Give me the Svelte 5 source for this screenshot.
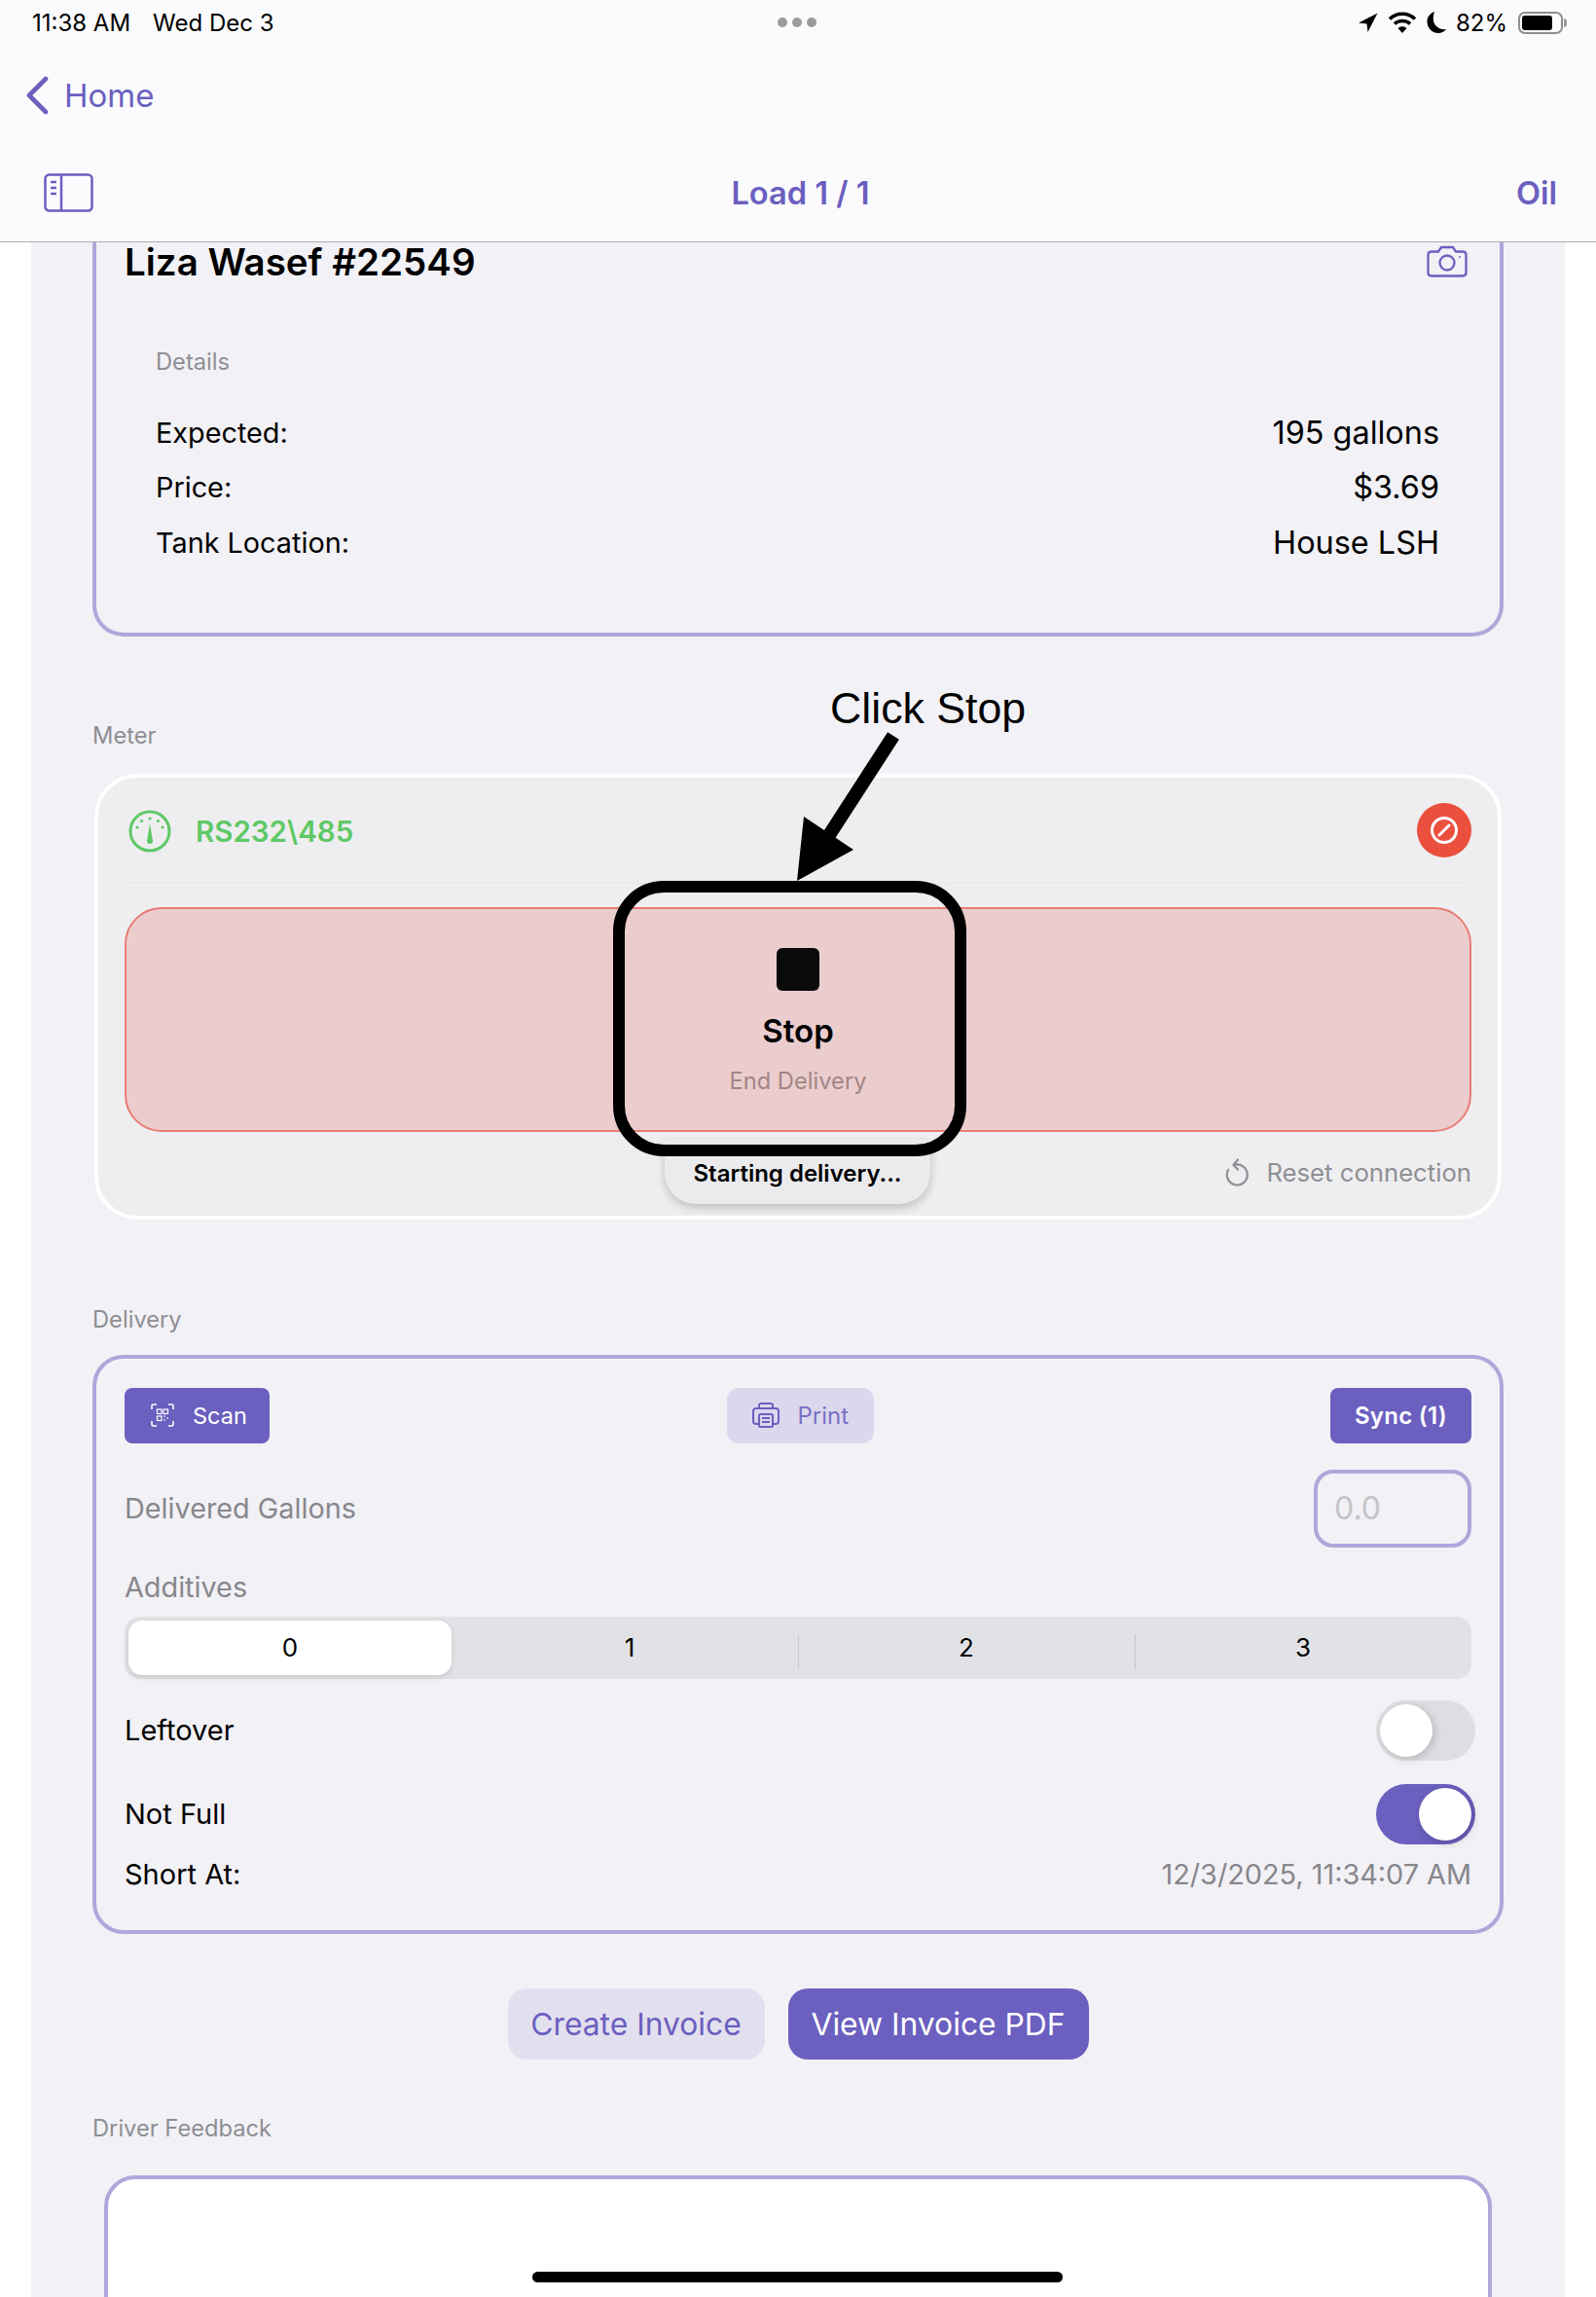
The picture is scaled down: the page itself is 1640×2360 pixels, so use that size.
<script lang="ts">
	const details = [
		{ label: 'Expected:', value: '195 gallons' },
		{ label: 'Price:', value: '$3.69' },
		{ label: 'Tank Location:', value: 'House LSH' }
	];
	const additives = [0, 1, 2, 3];
	let selectedAdditive = $state(0);
	let leftover = $state(false);
	let notFull = $state(true);
</script>

<div class="page">
	<header class="nav">
		<div class="status">
			<span class="clock">11:38 AM</span>
			<span class="date">Wed Dec 3</span>
			<span class="dots"><i></i><i></i><i></i></span>
			<span class="status-right">
				<svg width="20" height="20" viewBox="0 0 20 20"><path d="M19.5 .5 L9.5 20 L8.5 11.5 L0 10.5 Z" fill="#000" /></svg>
				<svg class="wifi" width="30" height="24" viewBox="0 0 30 24" fill="none" stroke="#000" stroke-width="3.6"><path d="M2 8.5 C9 1.5 21 1.5 28 8.5" /><path d="M7 13.5 C11 9.5 19 9.5 23 13.5" /><path d="M15 23 L10.5 18 C13 15.8 17 15.8 19.5 18 Z" fill="#000" stroke="none" /></svg>
				<svg width="20" height="24" viewBox="0 0 20 24"><path d="M8 1 C2.5 3 0 7.5 .5 12 C1 18.500 6 23 12 23 C15 23 18 21.500 20 19 C13 20 8 15.500 7 10.500 C6.500 7 7 4 8 1 Z" fill="#000" /></svg>
				<span class="pct">82%</span>
				<span class="battery"><b></b></span>
			</span>
		</div>
		<a class="back" href="#home">
			<svg width="24" height="40" viewBox="0 0 24 40" fill="none" stroke="currentColor" stroke-width="4.6" stroke-linecap="round" stroke-linejoin="round"><path d="M21 3 L4 20 L21 37" /></svg>
			<span>Home</span>
		</a>
		<div class="titlebar">
			<svg width="51" height="40" viewBox="0 0 51 40" fill="none" stroke="currentColor" stroke-width="2.5"><rect x="1.500" y="1.500" width="48" height="37" rx="4" /><path d="M18 2 V38" /><path d="M7 9 H13 M7 15 H13 M7 21 H13" /></svg>
			<strong>Load 1 / 1</strong>
			<span class="oil">Oil</span>
		</div>
	</header>

	<main class="sheet">
		<section class="card customer">
			<div class="customer-head">
				<h1>Liza Wasef #22549</h1>
				<svg width="42" height="33" viewBox="0 0 42 33" fill="none" stroke="currentColor" stroke-width="2.300"><path d="M5 6.500 H12 L15 2 H27 L30 6.500 H37 Q40.500 6.500 40.500 10 V28 Q40.500 31.500 37 31.500 H5 Q1.500 31.500 1.500 28 V10 Q1.500 6.500 5 6.500 Z" /><circle cx="21" cy="18" r="7.500" /><circle cx="34" cy="12" r="1" fill="currentColor" stroke="none" /></svg>
			</div>
			<div class="details">
				<div class="caption">Details</div>
				{#each details as row}
					<div class="detail-row"><span>{row.label}</span><span>{row.value}</span></div>
				{/each}
			</div>
		</section>

		<div class="caption section-label meter-label">Meter</div>
		<section class="meter">
			<div class="meter-head">
				<svg class="gauge" width="44" height="44" viewBox="0 0 44 44" fill="none" stroke="#5fc866" stroke-width="3"><circle cx="22" cy="22" r="20" /><path d="M22 14 L25 32 A3 3 0 0 1 19 32 Z" fill="#5fc866" stroke="none" /><circle cx="22" cy="9" r="1.600" fill="#5fc866" stroke="none" /><circle cx="13.500" cy="11.500" r="1.600" fill="#5fc866" stroke="none" /><circle cx="30.500" cy="11.500" r="1.600" fill="#5fc866" stroke="none" /><circle cx="9" cy="18" r="1.600" fill="#5fc866" stroke="none" /><circle cx="35" cy="18" r="1.600" fill="#5fc866" stroke="none" /></svg>
				<span class="port">RS232\485</span>
				<span class="disconnect">
					<svg width="30" height="30" viewBox="0 0 30 30" fill="none" stroke="#fff" stroke-width="3"><circle cx="15" cy="15" r="12.500" /><path d="M10 20 L20 10" stroke-linecap="round" /></svg>
				</span>
			</div>
			<button class="stop">
				<span class="stop-icon"></span>
				<span class="stop-title">Stop</span>
				<span class="stop-sub">End Delivery</span>
			</button>
			<div class="meter-foot">
				<svg width="24" height="30" viewBox="0 0 24 30" fill="none" stroke="#8e8e93" stroke-width="2.200" stroke-linecap="round" stroke-linejoin="round"><path d="M9 7 A10.500 10.500 0 1 1 3 12" /><path d="M13 1.500 L8.500 7 L13 11.500" /></svg>
				<span>Reset connection</span>
			</div>
			<div class="toast">Starting delivery...</div>
		</section>

		<div class="caption section-label delivery-label">Delivery</div>
		<section class="card delivery">
			<div class="toolbar">
				<button class="btn scan">
					<svg width="24" height="24" viewBox="0 0 24 24" fill="none" stroke="#fff" stroke-width="1.600"><path d="M1 6 V2.500 Q1 1 2.500 1 H6 M18 1 H21.500 Q23 1 23 2.500 V6 M23 18 V21.500 Q23 23 21.500 23 H18 M6 23 H2.500 Q1 23 1 21.500 V18" /><rect x="6.500" y="6" width="4.500" height="4.500" stroke-width="1.200" /><rect x="13" y="6" width="4.500" height="4.500" stroke-width="1.200" /><rect x="6.500" y="13" width="4.500" height="4.500" stroke-width="1.200" /><path d="M13 13 H15 M16 15 H18 M13 17 H15" stroke-width="1.200" /></svg>
					Scan
				</button>
				<button class="btn print">
					<svg width="28" height="26" viewBox="0 0 28 26" fill="none" stroke="#6b5fbf" stroke-width="2"><path d="M7 6 V3 Q7 1 9 1 H19 Q21 1 21 3 V6" /><path d="M7 22 H4 Q1 22 1 19 V9 Q1 6 4 6 H24 Q27 6 27 9 V19 Q27 22 24 22 H21" /><rect x="7" y="12" width="14" height="13" rx="1.500" /><path d="M10 16 H18 M10 20 H18" /></svg>
					Print
				</button>
				<button class="btn sync">Sync (1)</button>
			</div>

			<div class="gallons">
				<span class="muted">Delivered Gallons</span>
				<input class="gallons-input" placeholder="0.0" />
			</div>

			<div class="muted additives-label">Additives</div>
			<div class="segments">
				{#each additives as n, i}
					<button
						class="segment"
						class:active={selectedAdditive === n}
						class:divided={i > 1}
						onclick={() => { selectedAdditive = n; }}
					>{n}</button>
				{/each}
			</div>

			<div class="toggle-row leftover">
				<span>Leftover</span>
				<button class="toggle" class:on={leftover} aria-label="Leftover" onclick={() => { leftover = !leftover; }}><i></i></button>
			</div>
			<div class="toggle-row notfull">
				<span>Not Full</span>
				<button class="toggle" class:on={notFull} aria-label="Not Full" onclick={() => { notFull = !notFull; }}><i></i></button>
			</div>
			<div class="short-row">
				<span>Short At:</span>
				<span class="muted">12/3/2025, 11:34:07 AM</span>
			</div>
		</section>

		<div class="actions">
			<button class="action light">Create Invoice</button>
			<button class="action solid">View Invoice PDF</button>
		</div>

		<div class="caption section-label feedback-label">Driver Feedback</div>
		<div class="feedback"></div>
	</main>

	<!-- annotation drawn over the screenshot -->
	<div class="note">Click Stop</div>
	<svg class="arrow" width="120" height="160" viewBox="810 750 120 160">
		<path d="M918 756 L852 858" stroke="#000" stroke-width="14" />
		<path d="M819 905 L826 839 L877 873 Z" fill="#000" />
	</svg>
	<div class="highlight"></div>
	<div class="home-bar"></div>
</div>

<style>
	:global(body) {
		margin: 0;
		background: #fff;
	}

	.page {
		position: relative;
		width: 1640px;
		height: 2360px;
		overflow: hidden;
		display: flex;
		flex-direction: column;
		font-family: Inter, 'Liberation Sans', sans-serif;
		color: #000;
	}

	.nav {
		height: 248px;
		flex-shrink: 0;
		box-sizing: content-box;
		background: #fbfbfd;
		border-bottom: 1px solid #adadb0;
		color: #6b5fbf;
		display: flex;
		flex-direction: column;
	}

	.status {
		height: 46px;
		padding: 0 34px 0 33px;
		display: flex;
		align-items: center;
		position: relative;
		font-size: 24px;
		color: #000;
	}

	.date { margin-left: 23px; }

	.dots {
		position: absolute;
		left: 799px;
		top: 18px;
		display: flex;
		gap: 5px;
	}

	.dots i {
		width: 10px;
		height: 10px;
		border-radius: 50%;
		background: #9b9b9d;
	}

	.status-right {
		margin-left: auto;
		display: flex;
		align-items: center;
		gap: 10px;
	}

	.pct { margin-right: 1px; }

	.battery {
		width: 46px;
		height: 23px;
		box-sizing: border-box;
		border: 2px solid #8f8f92;
		border-radius: 7px;
		padding: 2px;
		position: relative;
		display: block;
	}

	.battery b {
		display: block;
		width: 82%;
		height: 100%;
		background: #000;
		border-radius: 3px;
	}

	.battery::after {
		content: '';
		position: absolute;
		right: -6px;
		top: 5px;
		width: 3px;
		height: 9px;
		background: #9b9b9d;
		border-radius: 0 3px 3px 0;
	}

	.back {
		margin-top: 32px;
		padding-left: 26px;
		height: 40px;
		display: flex;
		align-items: center;
		gap: 16px;
		color: inherit;
		text-decoration: none;
		font-size: 33px;
	}

	.titlebar {
		margin-top: 60px;
		padding: 0 40px 0 45px;
		height: 40px;
		display: flex;
		align-items: center;
		justify-content: space-between;
		font-size: 32.600px;
	}

	.titlebar strong {
		font-weight: 600;
		margin-left: -9px;
	}

	.oil { font-weight: 600; }

	.sheet {
		flex: 1;
		margin: 0 32px;
		padding: 0 63px;
		background: #f2f1f6;
		display: flex;
		flex-direction: column;
		min-height: 0;
	}

	.card {
		border: 4px solid #aea7da;
		border-radius: 32px;
	}

	.customer {
		border-top: none;
		border-top-left-radius: 0;
		border-top-right-radius: 0;
		padding: 0 33px 64px 29px;
		flex-shrink: 0;
	}

	.customer-head {
		height: 39px;
		display: flex;
		align-items: center;
		justify-content: space-between;
		color: #6b5fbf;
	}

	h1 {
		margin: 0;
		font-size: 38.500px;
		font-weight: 600;
		color: #000;
	}

	.details {
		margin: 69px 29px 0 32px;
	}

	.caption {
		font-size: 23.700px;
		line-height: 30px;
		color: #8e8e93;
	}

	.detail-row {
		display: flex;
		justify-content: space-between;
		align-items: center;
		height: 56.500px;
		font-size: 32.400px;
	}

	.details .caption { margin-bottom: 29px; }

	.detail-row span:first-child { font-size: 28.800px; }

	.section-label {
		flex-shrink: 0;
	}

	.meter-label { margin-top: 87px; }

	.meter {
		margin: 24px 2px 0 2px;
		height: 458px;
		flex-shrink: 0;
		box-sizing: border-box;
		position: relative;
		border: 4px solid #fff;
		border-radius: 44px;
		background: #eeeef0;
		padding: 0 27px;
	}

	.meter-head {
		height: 108px;
		display: flex;
		align-items: center;
		gap: 25px;
		border-bottom: 1px solid #e6e6e8;
	}

	.gauge { margin: 2px 0 0 4px; }

	.port {
		font-size: 29.500px;
		font-weight: 600;
		color: #5fc866;
		margin-top: 2px;
	}

	.disconnect {
		margin-left: auto;
		width: 56px;
		height: 56px;
		border-radius: 50%;
		background: #eb4f3d;
		display: flex;
		align-items: center;
		justify-content: center;
	}

	.stop {
		margin-top: 24px;
		width: 100%;
		height: 231px;
		padding: 40px 0 0;
		box-sizing: border-box;
		background: #ebcdce;
		border: 2px solid #e97c75;
		border-radius: 38px;
		display: flex;
		flex-direction: column;
		align-items: center;
		font-family: inherit;
	}

	.stop-icon {
		width: 44px;
		height: 44px;
		border-radius: 6px;
		background: #0a0a0a;
	}

	.stop-title {
		margin-top: 21px;
		font-size: 33px;
		line-height: 40px;
		font-weight: 600;
		color: #000;
	}

	.stop-sub {
		margin-top: 17px;
		font-size: 23.700px;
		line-height: 30px;
		color: #a28686;
	}

	.meter-foot {
		margin-top: 24px;
		display: flex;
		justify-content: flex-end;
		align-items: center;
		gap: 18px;
		font-size: 25.700px;
		line-height: 36px;
		color: #8e8e93;
	}

	.toast {
		position: absolute;
		left: 582px;
		top: 372px;
		width: 273px;
		height: 66px;
		box-sizing: border-box;
		padding-top: 19px;
		background: #ebebed;
		border-radius: 0 0 32px 32px;
		box-shadow: 0 4px 10px rgba(0, 0, 0, 0.2);
		text-align: center;
		font-size: 24px;
		line-height: 32px;
		font-weight: 600;
	}

	.delivery-label { margin-top: 88px; }

	.delivery {
		margin-top: 21px;
		height: 595px;
		box-sizing: border-box;
		flex-shrink: 0;
		padding: 30px 29px 0;
	}

	.toolbar {
		display: flex;
		justify-content: space-between;
		align-items: center;
	}

	.btn {
		height: 57px;
		border: none;
		border-radius: 8px;
		display: flex;
		align-items: center;
		font-family: inherit;
		font-size: 23.500px;
		background: #6b5fbf;
		color: #fff;
		padding: 0;
	}

	.scan {
		width: 149px;
		padding-left: 27px;
		gap: 19px;
	}

	.print {
		width: 151px;
		padding-left: 26px;
		gap: 19px;
		background: #dbd8ee;
		color: #7a6fc6;
		border-radius: 12px;
		font-size: 24px;
	}

	.sync {
		width: 145px;
		justify-content: center;
		font-weight: 600;
		font-size: 24px;
		letter-spacing: 0.3px;
	}

	.gallons {
		margin-top: 27px;
		display: flex;
		justify-content: space-between;
		align-items: center;
	}

	.muted {
		color: #87878c;
		font-size: 28.800px;
	}

	.gallons-input {
		width: 162px;
		height: 80px;
		box-sizing: border-box;
		border: 4px solid #aea7da;
		border-radius: 20px;
		background: transparent;
		padding: 0 0 0 17px;
		font-family: inherit;
		font-size: 32px;
		outline: none;
	}

	.gallons-input::placeholder { color: #c4c4c7; }

	.additives-label {
		margin-top: 23px;
		line-height: 36px;
	}

	.segments {
		margin-top: 12px;
		height: 64px;
		background: #e2e2e6;
		border-radius: 16px;
		display: grid;
		grid-template-columns: repeat(4, 1fr);
		align-items: center;
		box-sizing: border-box;
	}

	.segment {
		height: 56px;
		border: none;
		background: none;
		font-family: inherit;
		font-size: 26px;
		color: #000;
		padding: 0;
		position: relative;
	}

	.segment.active {
		margin: 0 10px 0 4px;
		background: #fff;
		border-radius: 14px;
		box-shadow: 0 2px 6px rgba(0, 0, 0, 0.12);
	}

	.segment.divided::before {
		content: '';
		position: absolute;
		left: 0;
		top: 14px;
		height: 36px;
		width: 1px;
		background: #c9c9cc;
	}

	.toggle-row {
		display: flex;
		justify-content: space-between;
		align-items: center;
		height: 62px;
		font-size: 29px;
	}

	.leftover { margin-top: 22px; }
	.notfull { margin-top: 24px; }

	.toggle {
		width: 102px;
		height: 62px;
		margin-right: -4px;
		padding: 4px;
		border: none;
		border-radius: 31px;
		background: #dedee2;
		display: flex;
	}

	.toggle i {
		width: 54px;
		height: 54px;
		border-radius: 50%;
		background: #fff;
		box-shadow: 2px 2px 8px rgba(0, 0, 0, 0.18);
	}

	.toggle.on {
		background: #6b5fbf;
		justify-content: flex-end;
	}

	.short-row {
		margin-top: 12px;
		display: flex;
		justify-content: space-between;
		align-items: center;
		font-size: 29px;
		line-height: 38px;
	}

	.actions {
		margin-top: 56px;
		display: flex;
		justify-content: center;
		gap: 24px;
		flex-shrink: 0;
	}

	.action {
		height: 73px;
		border: none;
		border-radius: 20px;
		font-family: inherit;
		font-size: 31.800px;
		padding: 0;
	}

	.light {
		width: 264px;
		background: #e2dfef;
		color: #6b5fbf;
	}

	.solid {
		width: 309px;
		background: #6b5fbf;
		color: #fff;
	}

	.feedback-label { margin-top: 56px; }

	.feedback {
		margin: 33px 12px 0 12px;
		height: 200px;
		flex-shrink: 0;
		background: #fff;
		border: 4px solid #aea7da;
		border-radius: 32px;
	}

	.note {
		position: absolute;
		left: 853px;
		top: 700px;
		font-family: 'Liberation Sans', Arial, sans-serif;
		font-size: 44.700px;
		line-height: 56px;
	}

	.arrow {
		position: absolute;
		left: 810px;
		top: 750px;
	}

	.highlight {
		position: absolute;
		left: 630px;
		top: 905px;
		width: 363px;
		height: 283px;
		box-sizing: border-box;
		border: 12px solid #000;
		border-radius: 52px;
	}

	.home-bar {
		position: absolute;
		left: 547px;
		top: 2334px;
		width: 545px;
		height: 11px;
		border-radius: 6px;
		background: #000;
	}
</style>
